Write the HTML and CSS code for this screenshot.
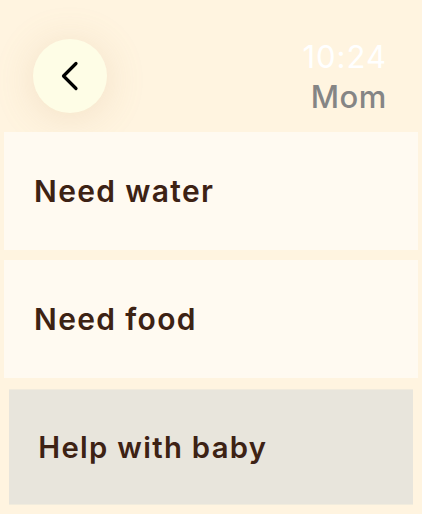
FILE: index.html
```html
<!DOCTYPE html>
<html lang="en">
<head>
    <meta charset="UTF-8">
    <meta name="viewport" content="width=device-width, initial-scale=1.0">
    <title>Requests</title>
    <link rel="stylesheet" href="styles.css">
</head>
<body>
    <div class="screen">
        <div class="header">
            <button class="back" aria-label="Back">
                <svg width="20" height="30" viewBox="0 0 20 30">
                    <path d="M16 2.5 L3.5 15 L16 27.5" fill="none" stroke="#000" stroke-width="3.2" stroke-linecap="round" stroke-linejoin="round"/>
                </svg>
            </button>
            <div class="status">
                <div class="time">10:24</div>
                <div class="title">Mom</div>
            </div>
        </div>

        <!-- Lista richieste -->
        <div class="list">
            <div class="item">Need water</div>
            <div class="item">Need food</div>
            <div class="item pressed">Help with baby</div>
        </div>
    </div>
</body>
</html>
```

FILE: styles.css
```css
body {
    margin: 0;
    background-color: #fff4e0;
    font-family: 'Inter', 'Noto Sans', sans-serif;
    overflow: hidden;
}

.screen {
    width: 422px;
    height: 514px;
}

.header {
    display: flex;
    justify-content: space-between;
    align-items: flex-start;
    height: 132px;
    padding: 0 35px 0 33px;
    box-sizing: border-box;
}

.back {
    width: 74px;
    height: 74px;
    margin-top: 39px;
    border: none;
    border-radius: 50%;
    background-color: #fefde6;
    box-shadow: 0 4px 40px rgba(190, 150, 90, 0.2);
    display: flex;
    justify-content: center;
    align-items: center;
    padding: 0;
    cursor: pointer;
}

.status {
    margin-top: 37px;
    text-align: right;
    font-weight: 500;
    font-size: 31px;
    line-height: 40px;
    letter-spacing: 0.6px;
}

.time {
    color: #ffffff;
    font-weight: 400;
    letter-spacing: 1px;
}

.title {
    color: #858585;
}

.list {
    display: flex;
    flex-direction: column;
    gap: 10px;
    padding: 0 4px;
}

.item {
    height: 118px;
    display: flex;
    align-items: center;
    padding-left: 30px;
    background-color: #fffaf1;
    color: #3d2214;
    font-size: 30px;
    font-weight: 600;
    letter-spacing: 1.35px;
}

.item.pressed {
    background-color: #e8e5dc;
    transform: scale(0.976);
}
```
